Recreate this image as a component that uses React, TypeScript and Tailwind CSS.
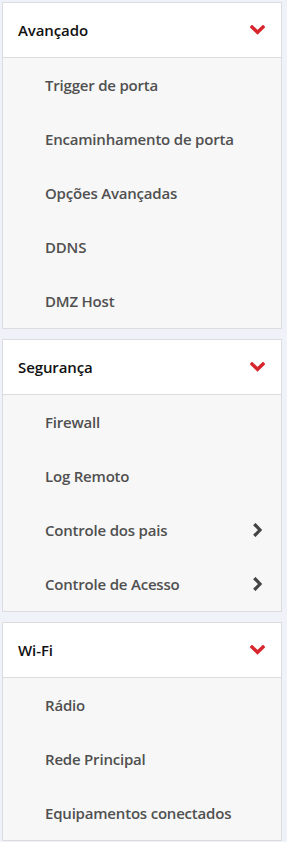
const sections = [
  {
    title: "Avançado",
    items: [
      { label: "Trigger de porta" },
      { label: "Encaminhamento de porta" },
      { label: "Opções Avançadas" },
      { label: "DDNS" },
      { label: "DMZ Host" },
    ],
  },
  {
    title: "Segurança",
    items: [
      { label: "Firewall" },
      { label: "Log Remoto" },
      { label: "Controle dos pais", sub: true },
      { label: "Controle de Acesso", sub: true },
    ],
  },
  {
    title: "Wi-Fi",
    items: [
      { label: "Rádio" },
      { label: "Rede Principal" },
      { label: "Equipamentos conectados" },
    ],
  },
];

function ChevronDown() {
  return (
    <svg width="15" height="10" viewBox="0 0 15 10" className="shrink-0">
      <path d="M2 2 L7.5 7.3 L13 2" fill="none" stroke="#d7262e" strokeWidth="3.4" strokeLinecap="square" />
    </svg>
  );
}

function ChevronRight() {
  return (
    <svg width="10" height="14" viewBox="0 0 10 14" className="shrink-0">
      <path d="M2.4 2.2 L7 7 L2.4 11.8" fill="none" stroke="#444444" strokeWidth="3.2" strokeLinecap="square" />
    </svg>
  );
}

export default function App() {
  return (
    <div
      className="min-h-[842px] bg-[#eff2f8] pt-[2px] pl-[2px] flex flex-col gap-[10px]"
      style={{ fontFamily: "'Open Sans', Lato, sans-serif" }}
    >
      {sections.map((s) => (
        <div key={s.title} className="w-[280px] border border-[#dcdcdf] bg-[#f7f7f7]">
          <div className="h-[55px] bg-white border-b border-[#dcdcdf] flex items-center justify-between pl-[15px] pr-[16px]">
            <span className="text-[15px] text-[#111111] font-semibold tracking-[-0.1px]">{s.title}</span>
            <ChevronDown />
          </div>
          {s.items.map((it) => (
            <div key={it.label} className="h-[54px] flex items-center justify-between pl-[42px] pr-[18px]">
              <span className="text-[15px] text-[#505050] font-semibold tracking-[-0.2px]">{it.label}</span>
              {it.sub && <ChevronRight />}
            </div>
          ))}
        </div>
      ))}
    </div>
  );
}
